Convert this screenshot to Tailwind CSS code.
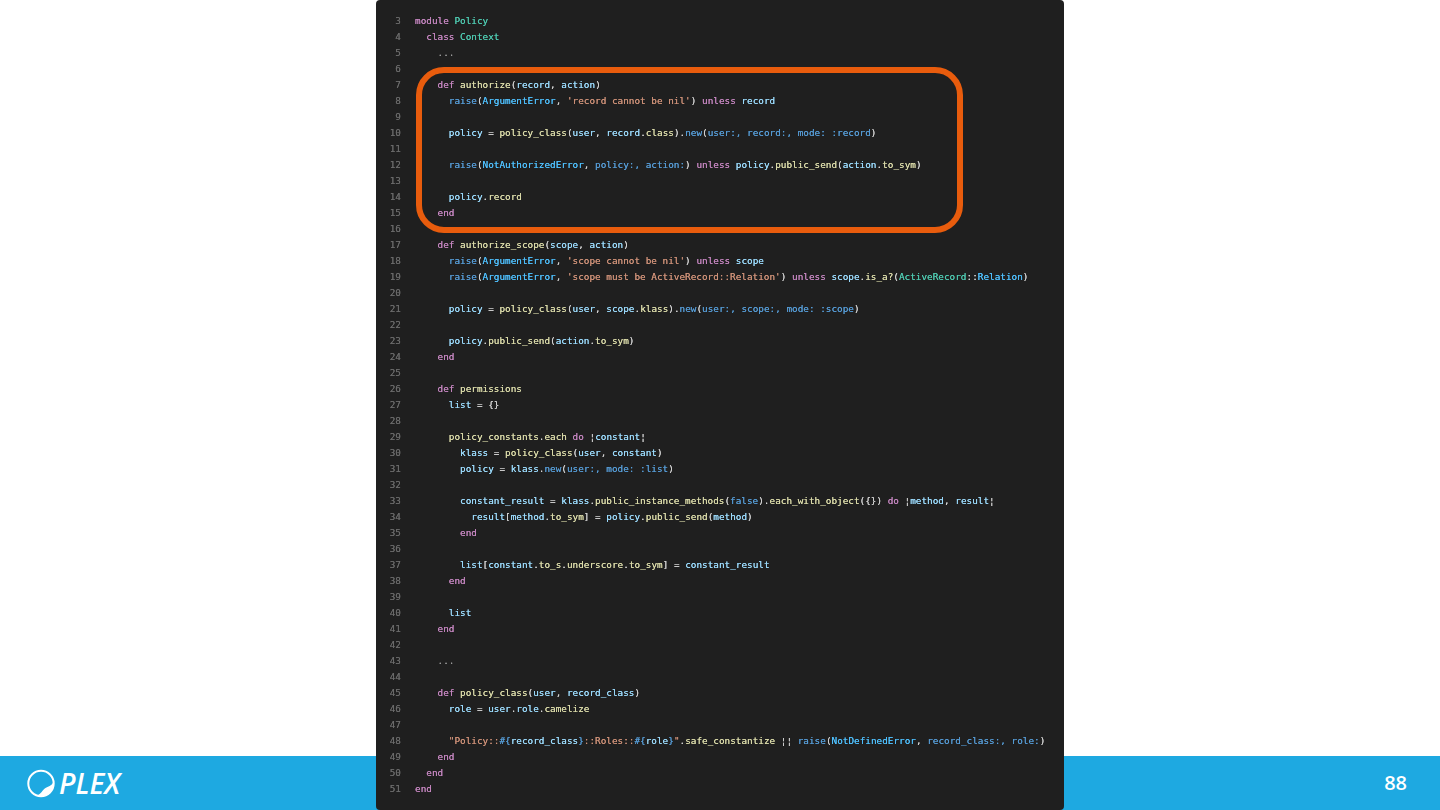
<!DOCTYPE html>
<html lang="en">
<head>
    <meta charset="UTF-8">
    <title>Policy context</title>
    <script src="https://cdn.jsdelivr.net/npm/@tailwindcss/browser@4"></script>
</head>
<body class="bg-white">
<div class="relative flex flex-col w-[1440px] h-[810px] overflow-hidden">
    <div class="flex-grow"></div>
    <footer class="flex items-center justify-between h-[54px] pl-[27px] pr-[33px] bg-[#1ea9e1] text-white">
        <div class="flex items-center gap-[4px]">
            <svg class="w-[28px] h-[29px]" viewBox="0 0 28 29" fill="none">
                <circle cx="14" cy="14.5" r="12.7" stroke="white" stroke-width="2"/>
                <path d="M10 26.5 C14 25 15.5 21 18.5 19 C21 17.5 24.5 17 26.5 13 C27.5 21 21 28 13.5 27.5 C12 27.4 11 27 10 26.5 Z" fill="white"/>
            </svg>
            <span class="font-['Open_Sans'] italic font-semibold text-[28px] leading-none">PLEX</span>
        </div>
        <span class="font-['Open_Sans'] font-semibold text-[20px] leading-none">88</span>
    </footer>

    <div class="absolute top-0 left-[376px] w-[688px] h-[810px] flex flex-col rounded-[4px] bg-[#1f1f1f] pt-[13px] font-['DejaVu_Sans_Mono'] text-[9.36px] leading-4 whitespace-pre text-[#9cdcfe]">
        <div class="flex flex-col blur-[0.3px] [text-shadow:0_0_0.4px_currentColor]">
            <div class="flex gap-[14px]"><span class="w-[25px] text-right text-[#6a6a6a]">3</span><span><span class="text-[#c586c0]">module</span> <span class="text-[#4ec9b0]">Policy</span></span></div>
            <div class="flex gap-[14px]"><span class="w-[25px] text-right text-[#6a6a6a]">4</span><span>  <span class="text-[#c586c0]">class</span> <span class="text-[#4ec9b0]">Context</span></span></div>
            <div class="flex gap-[14px]"><span class="w-[25px] text-right text-[#6a6a6a]">5</span><span class="text-[#9a9a9a]">    ...</span></div>
            <div class="flex gap-[14px]"><span class="w-[25px] text-right text-[#6a6a6a]">6</span><span></span></div>
            <div class="flex gap-[14px]"><span class="w-[25px] text-right text-[#6a6a6a]">7</span><span>    <span class="text-[#c586c0]">def</span> <span class="text-[#dcdcaa]">authorize</span><span class="text-[#d4d4d4]">(</span>record<span class="text-[#d4d4d4]">,</span> action<span class="text-[#d4d4d4]">)</span></span></div>
            <div class="flex gap-[14px]"><span class="w-[25px] text-right text-[#6a6a6a]">8</span><span>      <span class="text-[#569cd6]">raise</span><span class="text-[#d4d4d4]">(</span><span class="text-[#4fc1ff]">ArgumentError</span><span class="text-[#d4d4d4]">,</span> <span class="text-[#ce9178]">'record cannot be nil'</span><span class="text-[#d4d4d4]">)</span> <span class="text-[#c586c0]">unless</span> record</span></div>
            <div class="flex gap-[14px]"><span class="w-[25px] text-right text-[#6a6a6a]">9</span><span></span></div>
            <div class="flex gap-[14px]"><span class="w-[25px] text-right text-[#6a6a6a]">10</span><span>      policy <span class="text-[#d4d4d4]">=</span> <span class="text-[#dcdcaa]">policy_class</span><span class="text-[#d4d4d4]">(</span>user<span class="text-[#d4d4d4]">,</span> record<span class="text-[#d4d4d4]">.</span><span class="text-[#dcdcaa]">class</span><span class="text-[#d4d4d4]">).</span><span class="text-[#569cd6]">new</span><span class="text-[#d4d4d4]">(</span><span class="text-[#569cd6]">user:, record:, mode: :record</span><span class="text-[#d4d4d4]">)</span></span></div>
            <div class="flex gap-[14px]"><span class="w-[25px] text-right text-[#6a6a6a]">11</span><span></span></div>
            <div class="flex gap-[14px]"><span class="w-[25px] text-right text-[#6a6a6a]">12</span><span>      <span class="text-[#569cd6]">raise</span><span class="text-[#d4d4d4]">(</span><span class="text-[#4fc1ff]">NotAuthorizedError</span><span class="text-[#d4d4d4]">,</span> <span class="text-[#569cd6]">policy:, action:</span><span class="text-[#d4d4d4]">)</span> <span class="text-[#c586c0]">unless</span> policy<span class="text-[#d4d4d4]">.</span><span class="text-[#dcdcaa]">public_send</span><span class="text-[#d4d4d4]">(</span>action<span class="text-[#d4d4d4]">.</span><span class="text-[#dcdcaa]">to_sym</span><span class="text-[#d4d4d4]">)</span></span></div>
            <div class="flex gap-[14px]"><span class="w-[25px] text-right text-[#6a6a6a]">13</span><span></span></div>
            <div class="flex gap-[14px]"><span class="w-[25px] text-right text-[#6a6a6a]">14</span><span>      policy<span class="text-[#d4d4d4]">.</span><span class="text-[#dcdcaa]">record</span></span></div>
            <div class="flex gap-[14px]"><span class="w-[25px] text-right text-[#6a6a6a]">15</span><span class="text-[#c586c0]">    end</span></div>
            <div class="flex gap-[14px]"><span class="w-[25px] text-right text-[#6a6a6a]">16</span><span></span></div>
            <div class="flex gap-[14px]"><span class="w-[25px] text-right text-[#6a6a6a]">17</span><span>    <span class="text-[#c586c0]">def</span> <span class="text-[#dcdcaa]">authorize_scope</span><span class="text-[#d4d4d4]">(</span>scope<span class="text-[#d4d4d4]">,</span> action<span class="text-[#d4d4d4]">)</span></span></div>
            <div class="flex gap-[14px]"><span class="w-[25px] text-right text-[#6a6a6a]">18</span><span>      <span class="text-[#569cd6]">raise</span><span class="text-[#d4d4d4]">(</span><span class="text-[#4fc1ff]">ArgumentError</span><span class="text-[#d4d4d4]">,</span> <span class="text-[#ce9178]">'scope cannot be nil'</span><span class="text-[#d4d4d4]">)</span> <span class="text-[#c586c0]">unless</span> scope</span></div>
            <div class="flex gap-[14px]"><span class="w-[25px] text-right text-[#6a6a6a]">19</span><span>      <span class="text-[#569cd6]">raise</span><span class="text-[#d4d4d4]">(</span><span class="text-[#4fc1ff]">ArgumentError</span><span class="text-[#d4d4d4]">,</span> <span class="text-[#ce9178]">'scope must be ActiveRecord::Relation'</span><span class="text-[#d4d4d4]">)</span> <span class="text-[#c586c0]">unless</span> scope<span class="text-[#d4d4d4]">.</span><span class="text-[#dcdcaa]">is_a?</span><span class="text-[#d4d4d4]">(</span><span class="text-[#4ec9b0]">ActiveRecord</span><span class="text-[#d4d4d4]">::</span><span class="text-[#4fc1ff]">Relation</span><span class="text-[#d4d4d4]">)</span></span></div>
            <div class="flex gap-[14px]"><span class="w-[25px] text-right text-[#6a6a6a]">20</span><span></span></div>
            <div class="flex gap-[14px]"><span class="w-[25px] text-right text-[#6a6a6a]">21</span><span>      policy <span class="text-[#d4d4d4]">=</span> <span class="text-[#dcdcaa]">policy_class</span><span class="text-[#d4d4d4]">(</span>user<span class="text-[#d4d4d4]">,</span> scope<span class="text-[#d4d4d4]">.</span><span class="text-[#dcdcaa]">klass</span><span class="text-[#d4d4d4]">).</span><span class="text-[#569cd6]">new</span><span class="text-[#d4d4d4]">(</span><span class="text-[#569cd6]">user:, scope:, mode: :scope</span><span class="text-[#d4d4d4]">)</span></span></div>
            <div class="flex gap-[14px]"><span class="w-[25px] text-right text-[#6a6a6a]">22</span><span></span></div>
            <div class="flex gap-[14px]"><span class="w-[25px] text-right text-[#6a6a6a]">23</span><span>      policy<span class="text-[#d4d4d4]">.</span><span class="text-[#dcdcaa]">public_send</span><span class="text-[#d4d4d4]">(</span>action<span class="text-[#d4d4d4]">.</span><span class="text-[#dcdcaa]">to_sym</span><span class="text-[#d4d4d4]">)</span></span></div>
            <div class="flex gap-[14px]"><span class="w-[25px] text-right text-[#6a6a6a]">24</span><span class="text-[#c586c0]">    end</span></div>
            <div class="flex gap-[14px]"><span class="w-[25px] text-right text-[#6a6a6a]">25</span><span></span></div>
            <div class="flex gap-[14px]"><span class="w-[25px] text-right text-[#6a6a6a]">26</span><span>    <span class="text-[#c586c0]">def</span> <span class="text-[#dcdcaa]">permissions</span></span></div>
            <div class="flex gap-[14px]"><span class="w-[25px] text-right text-[#6a6a6a]">27</span><span>      list <span class="text-[#d4d4d4]">= {}</span></span></div>
            <div class="flex gap-[14px]"><span class="w-[25px] text-right text-[#6a6a6a]">28</span><span></span></div>
            <div class="flex gap-[14px]"><span class="w-[25px] text-right text-[#6a6a6a]">29</span><span>      <span class="text-[#dcdcaa]">policy_constants</span><span class="text-[#d4d4d4]">.</span><span class="text-[#dcdcaa]">each</span> <span class="text-[#c586c0]">do</span> <span class="text-[#d4d4d4]">¦</span>constant<span class="text-[#d4d4d4]">¦</span></span></div>
            <div class="flex gap-[14px]"><span class="w-[25px] text-right text-[#6a6a6a]">30</span><span>        klass <span class="text-[#d4d4d4]">=</span> <span class="text-[#dcdcaa]">policy_class</span><span class="text-[#d4d4d4]">(</span>user<span class="text-[#d4d4d4]">,</span> constant<span class="text-[#d4d4d4]">)</span></span></div>
            <div class="flex gap-[14px]"><span class="w-[25px] text-right text-[#6a6a6a]">31</span><span>        policy <span class="text-[#d4d4d4]">=</span> klass<span class="text-[#d4d4d4]">.</span><span class="text-[#569cd6]">new</span><span class="text-[#d4d4d4]">(</span><span class="text-[#569cd6]">user:, mode: :list</span><span class="text-[#d4d4d4]">)</span></span></div>
            <div class="flex gap-[14px]"><span class="w-[25px] text-right text-[#6a6a6a]">32</span><span></span></div>
            <div class="flex gap-[14px]"><span class="w-[25px] text-right text-[#6a6a6a]">33</span><span>        constant_result <span class="text-[#d4d4d4]">=</span> klass<span class="text-[#d4d4d4]">.</span><span class="text-[#dcdcaa]">public_instance_methods</span><span class="text-[#d4d4d4]">(</span><span class="text-[#569cd6]">false</span><span class="text-[#d4d4d4]">).</span><span class="text-[#dcdcaa]">each_with_object</span><span class="text-[#d4d4d4]">({})</span> <span class="text-[#c586c0]">do</span> <span class="text-[#d4d4d4]">¦</span>method<span class="text-[#d4d4d4]">,</span> result<span class="text-[#d4d4d4]">¦</span></span></div>
            <div class="flex gap-[14px]"><span class="w-[25px] text-right text-[#6a6a6a]">34</span><span>          result<span class="text-[#d4d4d4]">[</span>method<span class="text-[#d4d4d4]">.</span><span class="text-[#dcdcaa]">to_sym</span><span class="text-[#d4d4d4]">] =</span> policy<span class="text-[#d4d4d4]">.</span><span class="text-[#dcdcaa]">public_send</span><span class="text-[#d4d4d4]">(</span>method<span class="text-[#d4d4d4]">)</span></span></div>
            <div class="flex gap-[14px]"><span class="w-[25px] text-right text-[#6a6a6a]">35</span><span class="text-[#c586c0]">        end</span></div>
            <div class="flex gap-[14px]"><span class="w-[25px] text-right text-[#6a6a6a]">36</span><span></span></div>
            <div class="flex gap-[14px]"><span class="w-[25px] text-right text-[#6a6a6a]">37</span><span>        list<span class="text-[#d4d4d4]">[</span>constant<span class="text-[#d4d4d4]">.</span><span class="text-[#dcdcaa]">to_s</span><span class="text-[#d4d4d4]">.</span><span class="text-[#dcdcaa]">underscore</span><span class="text-[#d4d4d4]">.</span><span class="text-[#dcdcaa]">to_sym</span><span class="text-[#d4d4d4]">] =</span> constant_result</span></div>
            <div class="flex gap-[14px]"><span class="w-[25px] text-right text-[#6a6a6a]">38</span><span class="text-[#c586c0]">      end</span></div>
            <div class="flex gap-[14px]"><span class="w-[25px] text-right text-[#6a6a6a]">39</span><span></span></div>
            <div class="flex gap-[14px]"><span class="w-[25px] text-right text-[#6a6a6a]">40</span><span>      list</span></div>
            <div class="flex gap-[14px]"><span class="w-[25px] text-right text-[#6a6a6a]">41</span><span class="text-[#c586c0]">    end</span></div>
            <div class="flex gap-[14px]"><span class="w-[25px] text-right text-[#6a6a6a]">42</span><span></span></div>
            <div class="flex gap-[14px]"><span class="w-[25px] text-right text-[#6a6a6a]">43</span><span class="text-[#9a9a9a]">    ...</span></div>
            <div class="flex gap-[14px]"><span class="w-[25px] text-right text-[#6a6a6a]">44</span><span></span></div>
            <div class="flex gap-[14px]"><span class="w-[25px] text-right text-[#6a6a6a]">45</span><span>    <span class="text-[#c586c0]">def</span> <span class="text-[#dcdcaa]">policy_class</span><span class="text-[#d4d4d4]">(</span>user<span class="text-[#d4d4d4]">,</span> record_class<span class="text-[#d4d4d4]">)</span></span></div>
            <div class="flex gap-[14px]"><span class="w-[25px] text-right text-[#6a6a6a]">46</span><span>      role <span class="text-[#d4d4d4]">=</span> user<span class="text-[#d4d4d4]">.</span>role<span class="text-[#d4d4d4]">.</span><span class="text-[#dcdcaa]">camelize</span></span></div>
            <div class="flex gap-[14px]"><span class="w-[25px] text-right text-[#6a6a6a]">47</span><span></span></div>
            <div class="flex gap-[14px]"><span class="w-[25px] text-right text-[#6a6a6a]">48</span><span>      <span class="text-[#ce9178]">"Policy::</span><span class="text-[#569cd6]">#{</span>record_class<span class="text-[#569cd6]">}</span><span class="text-[#ce9178]">::Roles::</span><span class="text-[#569cd6]">#{</span>role<span class="text-[#569cd6]">}</span><span class="text-[#ce9178]">"</span><span class="text-[#d4d4d4]">.</span><span class="text-[#dcdcaa]">safe_constantize</span> <span class="text-[#d4d4d4]">¦¦</span> <span class="text-[#569cd6]">raise</span><span class="text-[#d4d4d4]">(</span><span class="text-[#4fc1ff]">NotDefinedError</span><span class="text-[#d4d4d4]">,</span> <span class="text-[#569cd6]">record_class:, role:</span><span class="text-[#d4d4d4]">)</span></span></div>
            <div class="flex gap-[14px]"><span class="w-[25px] text-right text-[#6a6a6a]">49</span><span class="text-[#c586c0]">    end</span></div>
            <div class="flex gap-[14px]"><span class="w-[25px] text-right text-[#6a6a6a]">50</span><span class="text-[#c586c0]">  end</span></div>
            <div class="flex gap-[14px]"><span class="w-[25px] text-right text-[#6a6a6a]">51</span><span class="text-[#c586c0]">end</span></div>
        </div>
    </div>

    <!-- highlight round the authorize method -->
    <div class="absolute left-[416px] top-[67px] w-[547px] h-[166px] rounded-[28px] border-[6px] border-[#e85c0d]"></div>
</div>
</body>
</html>
